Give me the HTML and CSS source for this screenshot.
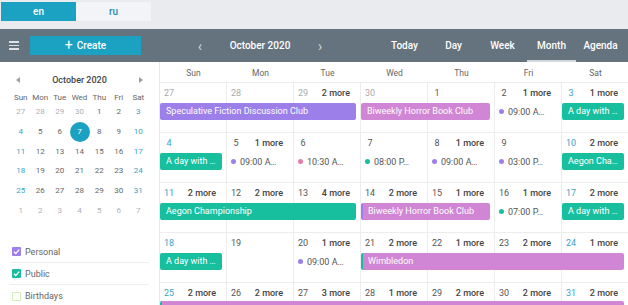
FILE: index.html
```html
<!DOCTYPE html>
<html lang="en">
<head>
  <meta charset="UTF-8" />
  <meta name="viewport" content="width=device-width, initial-scale=1.0"/>
  <title>Calendar</title>

  <link rel="stylesheet" href="styles.css">
</head>
<body>
  <!-- Language switch -->
  <div class="lang-bar">
    <button class="lang active">en</button>
    <button class="lang">ru</button>
  </div>

  <!-- Toolbar -->
  <div class="toolbar">
    <div class="toolbar-left">
      <span class="burger"><i></i><i></i><i></i></span>
      <button class="create-btn"><span class="plus">+</span>Create</button>
    </div>
    <div class="nav">
      <span class="nav-arrow">‹</span>
      <span class="nav-title">October 2020</span>
      <span class="nav-arrow">›</span>
    </div>
    <div class="views">
      <span class="view">Today</span>
      <span class="view">Day</span>
      <span class="view">Week</span>
      <span class="view active">Month</span>
      <span class="view">Agenda</span>
    </div>
  </div>

  <div class="main">
    <!-- Sidebar -->
    <aside class="sidebar">
      <div class="mini-cal">
        <div class="mini-head">
          <svg width="4" height="6" viewBox="0 0 4 6"><polygon points="4,0 4,6 0,3" fill="#9aa0a6"/></svg>
          <span>October 2020</span>
          <svg width="4" height="6" viewBox="0 0 4 6"><polygon points="0,0 0,6 4,3" fill="#9aa0a6"/></svg>
        </div>
        <div class="mini-grid">
          <span class="dn">Sun</span><span class="dn">Mon</span><span class="dn">Tue</span><span class="dn">Wed</span><span class="dn">Thu</span><span class="dn">Fri</span><span class="dn">Sat</span>

          <span class="md other">27</span><span class="md other">28</span><span class="md other">29</span><span class="md other">30</span><span class="md">1</span><span class="md">2</span><span class="md wk">3</span>
          <span class="md wk">4</span><span class="md">5</span><span class="md">6</span><span class="md sel">7</span><span class="md">8</span><span class="md">9</span><span class="md wk">10</span>
          <span class="md wk">11</span><span class="md">12</span><span class="md">13</span><span class="md">14</span><span class="md">15</span><span class="md">16</span><span class="md wk">17</span>
          <span class="md wk">18</span><span class="md">19</span><span class="md">20</span><span class="md">21</span><span class="md">22</span><span class="md">23</span><span class="md wk">24</span>
          <span class="md wk">25</span><span class="md">26</span><span class="md">27</span><span class="md">28</span><span class="md">29</span><span class="md">30</span><span class="md wk">31</span>
          <span class="md other">1</span><span class="md other">2</span><span class="md other">3</span><span class="md other">4</span><span class="md other">5</span><span class="md other">6</span><span class="md other">7</span>
        </div>
      </div>

      <ul class="filters">
        <li><span class="check purple"><svg viewBox="0 0 10 10"><polyline points="2.2,5.2 4.2,7.2 8,3" /></svg></span>Personal</li>
        <li><span class="check teal"><svg viewBox="0 0 10 10"><polyline points="2.2,5.2 4.2,7.2 8,3" /></svg></span>Public</li>
        <li><span class="check empty"></span>Birthdays</li>
      </ul>
    </aside>

    <!-- Month view -->
    <section class="month">
      <div class="week-days">
        <span>Sun</span><span>Mon</span><span>Tue</span><span>Wed</span><span>Thu</span><span>Fri</span><span>Sat</span>
      </div>

      <div class="week">
        <div class="cell"><div class="cell-head"><span class="num other">27</span></div></div>
        <div class="cell"><div class="cell-head"><span class="num other">28</span></div></div>
        <div class="cell"><div class="cell-head"><span class="num other">29</span><span class="more">2 more</span></div></div>
        <div class="cell"><div class="cell-head"><span class="num other">30</span></div></div>
        <div class="cell"><div class="cell-head"><span class="num">1</span></div></div>
        <div class="cell"><div class="cell-head"><span class="num">2</span><span class="more">1 more</span></div></div>
        <div class="cell"><div class="cell-head"><span class="num wk">3</span><span class="more">1 more</span></div></div>

        <div class="ev purple c1 s3">Speculative Fiction Discussion Club</div>
        <div class="ev pink c4 s2">Biweekly Horror Book Club</div>
        <div class="dot-ev c6"><span class="dot purple"></span>09:00 A…</div>
        <div class="ev teal c7">A day with …</div>
      </div>

      <div class="week">
        <div class="cell"><div class="cell-head"><span class="num wk">4</span></div></div>
        <div class="cell"><div class="cell-head"><span class="num">5</span><span class="more">1 more</span></div></div>
        <div class="cell"><div class="cell-head"><span class="num">6</span></div></div>
        <div class="cell"><div class="cell-head"><span class="num">7</span></div></div>
        <div class="cell"><div class="cell-head"><span class="num">8</span><span class="more">1 more</span></div></div>
        <div class="cell"><div class="cell-head"><span class="num">9</span></div></div>
        <div class="cell"><div class="cell-head"><span class="num wk">10</span><span class="more">2 more</span></div></div>

        <div class="ev teal c1">A day with …</div>
        <div class="dot-ev c2"><span class="dot purple"></span>09:00 A…</div>
        <div class="dot-ev c3"><span class="dot rose"></span>10:30 A…</div>
        <div class="dot-ev c4"><span class="dot teal"></span>08:00 P…</div>
        <div class="dot-ev c5"><span class="dot purple"></span>09:00 A…</div>
        <div class="dot-ev c6"><span class="dot purple"></span>03:00 P…</div>
        <div class="ev teal c7">Aegon Cha…</div>
      </div>

      <div class="week">
        <div class="cell"><div class="cell-head"><span class="num wk">11</span><span class="more">2 more</span></div></div>
        <div class="cell"><div class="cell-head"><span class="num">12</span><span class="more">2 more</span></div></div>
        <div class="cell"><div class="cell-head"><span class="num">13</span><span class="more">4 more</span></div></div>
        <div class="cell"><div class="cell-head"><span class="num">14</span><span class="more">2 more</span></div></div>
        <div class="cell"><div class="cell-head"><span class="num">15</span><span class="more">1 more</span></div></div>
        <div class="cell"><div class="cell-head"><span class="num">16</span><span class="more">1 more</span></div></div>
        <div class="cell"><div class="cell-head"><span class="num wk">17</span><span class="more">2 more</span></div></div>

        <div class="ev teal c1 s3">Aegon Championship</div>
        <div class="ev pink edge-purple c4 s2">Biweekly Horror Book Club</div>
        <div class="dot-ev c6"><span class="dot teal"></span>07:00 P…</div>
        <div class="ev teal c7">A day with …</div>
      </div>

      <div class="week">
        <div class="cell"><div class="cell-head"><span class="num wk">18</span></div></div>
        <div class="cell"><div class="cell-head"><span class="num">19</span></div></div>
        <div class="cell"><div class="cell-head"><span class="num">20</span><span class="more">1 more</span></div></div>
        <div class="cell"><div class="cell-head"><span class="num">21</span><span class="more">2 more</span></div></div>
        <div class="cell"><div class="cell-head"><span class="num">22</span><span class="more">1 more</span></div></div>
        <div class="cell"><div class="cell-head"><span class="num">23</span><span class="more">2 more</span></div></div>
        <div class="cell"><div class="cell-head"><span class="num wk">24</span><span class="more">1 more</span></div></div>

        <div class="ev teal c1">A day with …</div>
        <div class="dot-ev c3"><span class="dot purple"></span>09:00 A…</div>
        <div class="ev pink edge-teal c4 s4">Wimbledon</div>
      </div>

      <div class="week">
        <div class="cell"><div class="cell-head"><span class="num wk">25</span><span class="more">2 more</span></div></div>
        <div class="cell"><div class="cell-head"><span class="num">26</span><span class="more">2 more</span></div></div>
        <div class="cell"><div class="cell-head"><span class="num">27</span><span class="more">3 more</span></div></div>
        <div class="cell"><div class="cell-head"><span class="num">28</span><span class="more">1 more</span></div></div>
        <div class="cell"><div class="cell-head"><span class="num">29</span><span class="more">2 more</span></div></div>
        <div class="cell"><div class="cell-head"><span class="num">30</span><span class="more">2 more</span></div></div>
        <div class="cell"><div class="cell-head"><span class="num wk">31</span><span class="more">2 more</span></div></div>

        <!-- continues below the fold, label not visible -->
        <div class="ev pink edge-teal c1 s7 cut"></div>
      </div>
    </section>
  </div>
</body>
</html>
```

FILE: styles.css
```css
* {
  box-sizing: border-box;
}

body {
  margin: 0;
  font-family: Roboto, "Liberation Sans", sans-serif;
  color: #555;
  background: #fff;
  overflow: hidden;
}

/* language switch */
.lang-bar {
  height: 29px;
  background: #eaebef;
  padding: 2px 0 0 1px;
  display: flex;
  align-items: flex-start;
}

.lang {
  width: 75px;
  height: 19px;
  padding: 0;
  border: none;
  font: 500 10px Roboto, sans-serif;
  background: #f3f4f8;
  color: #2f8db0;
}

.lang.active {
  background: #1ba1c2;
  color: #fff;
}

/* toolbar */
.toolbar {
  height: 33px;
  background: #65737f;
  display: flex;
  color: #fff;
  font-size: 10px;
  font-weight: 500;
}

.toolbar-left {
  width: 159px;
  flex: none;
  display: flex;
  align-items: center;
  padding-left: 9px;
}

.burger {
  width: 10px;
  display: flex;
  flex-direction: column;
  gap: 2px;
}

.burger i {
  height: 1.5px;
  background: #dde1e5;
}

.create-btn {
  margin-left: 11px;
  width: 111px;
  height: 19px;
  border: none;
  background: #1ba1c2;
  color: #fff;
  font: 500 10px Roboto, sans-serif;
  display: flex;
  align-items: center;
  justify-content: center;
  gap: 4px;
}

.plus {
  font-size: 14px;
  font-weight: 400;
  line-height: 1;
  margin-top: -1px;
}

.nav {
  display: flex;
  align-items: center;
  padding-left: 31px;
}

.nav-arrow {
  width: 20px;
  text-align: center;
  font-size: 14px;
  color: #c9d0d6;
}

.nav-title {
  width: 100px;
  text-align: center;
}

.views {
  margin-left: auto;
  margin-right: 3px;
  display: flex;
}

.view {
  width: 49px;
  display: flex;
  align-items: center;
  justify-content: center;
  border-bottom: 2px solid transparent;
  padding-top: 2px;
}

.view.active {
  border-bottom-color: #d3d8dd;
}

/* layout */
.main {
  display: flex;
  height: 243px;
}

.sidebar {
  width: 160px;
  flex: none;
  border-right: 1px solid #e8e8e8;
}

.mini-cal {
  padding: 6px 11px 0;
}

.mini-head {
  height: 24px;
  padding: 0 5px;
  display: flex;
  align-items: center;
  justify-content: space-between;
  font-size: 9px;
  font-weight: 500;
  color: #444;
}

.mini-grid {
  display: grid;
  grid-template-columns: repeat(7, 1fr);
  grid-template-rows: 10px repeat(6, 19.7px);
  font-size: 8px;
}

.mini-grid span {
  display: flex;
  align-items: center;
  justify-content: center;
}

.dn {
  color: #666;
}

.md {
  color: #666;
}

.md.other {
  color: #aeb1b5;
}

.md.wk {
  color: #3aa4c6;
}

.md.sel {
  width: 20px;
  height: 20px;
  justify-self: center;
  align-self: center;
  border-radius: 50%;
  background: #1ba1c2;
  color: #fff;
}

.filters {
  list-style: none;
  margin: 21px 10px 0;
  padding: 0;
}

.filters li {
  height: 22px;
  padding-left: 2px;
  display: flex;
  align-items: center;
  gap: 4px;
  font-size: 9px;
  color: #666;
  border-bottom: 1px solid #eee;
}

.filters li:last-child {
  border-bottom: none;
}

.check {
  width: 9px;
  height: 9px;
  border-radius: 1px;
  display: flex;
}

.check svg {
  width: 9px;
  height: 9px;
  fill: none;
  stroke: #fff;
  stroke-width: 1.4;
}

.check.purple {
  background: #9c7fe9;
}

.check.teal {
  background: #18bf9f;
}

.check.empty {
  border: 1px solid #d3eeb4;
}

/* month grid */
.month {
  width: 469px;
  flex: none;
}

.week-days {
  display: grid;
  grid-template-columns: repeat(7, 67px);
  height: 21px;
  border-bottom: 1px solid #ececec;
  font-size: 8.5px;
  color: #666;
}

.week-days span {
  display: flex;
  align-items: center;
  justify-content: center;
  padding-top: 2px;
}

.week {
  display: grid;
  grid-template-columns: repeat(7, 67px);
  grid-template-rows: 20px 17px 13px;
  height: 50px;
}

.cell {
  grid-row: 1 / 4;
  border-right: 1px solid #ededed;
  border-bottom: 1px solid #ededed;
}

.cell:nth-child(1) { grid-column: 1; }
.cell:nth-child(2) { grid-column: 2; }
.cell:nth-child(3) { grid-column: 3; }
.cell:nth-child(4) { grid-column: 4; }
.cell:nth-child(5) { grid-column: 5; }
.cell:nth-child(6) { grid-column: 6; }
.cell:nth-child(7) { grid-column: 7; }

.cell-head {
  height: 19px;
  padding-right: 10px;
  display: flex;
  align-items: center;
  justify-content: space-between;
  font-size: 9px;
}

.num {
  width: 18px;
  text-align: center;
  color: #555;
}

.num.other {
  color: #aaa;
}

.num.wk {
  color: #3aa4c6;
}

.more {
  font-weight: 500;
  color: #444;
}

.c1 { grid-column-start: 1; }
.c2 { grid-column-start: 2; }
.c3 { grid-column-start: 3; }
.c4 { grid-column-start: 4; }
.c5 { grid-column-start: 5; }
.c6 { grid-column-start: 6; }
.c7 { grid-column-start: 7; }
.s2 { grid-column-end: span 2; }
.s3 { grid-column-end: span 3; }
.s4 { grid-column-end: span 4; }
.s7 { grid-column-end: span 7; }

.ev {
  grid-row: 2;
  margin-right: 5px;
  padding: 0 6px;
  border-radius: 2px;
  color: #fff;
  font-size: 9px;
  line-height: 17px;
  white-space: nowrap;
  overflow: hidden;
}

.ev.cut {
  margin-top: -2px;
}

.ev.purple {
  background: #9c7fe9;
}

.ev.pink {
  background: #d086d4;
}

.ev.teal {
  background: #18bf9f;
}

.ev.edge-purple {
  border-left: 2px solid #9c7fe9;
  padding-left: 5px;
}

.ev.edge-teal {
  border-left: 2px solid #18bf9f;
  padding-left: 5px;
}

.dot-ev {
  grid-row: 2;
  padding-left: 4px;
  display: flex;
  align-items: center;
  gap: 4px;
  font-size: 9px;
  color: #555;
  white-space: nowrap;
  overflow: hidden;
}

.dot {
  width: 5px;
  height: 5px;
  border-radius: 50%;
  flex: none;
}

.dot.purple {
  background: #9c7fe9;
}

.dot.rose {
  background: #e07fae;
}

.dot.teal {
  background: #18bf9f;
}
```
